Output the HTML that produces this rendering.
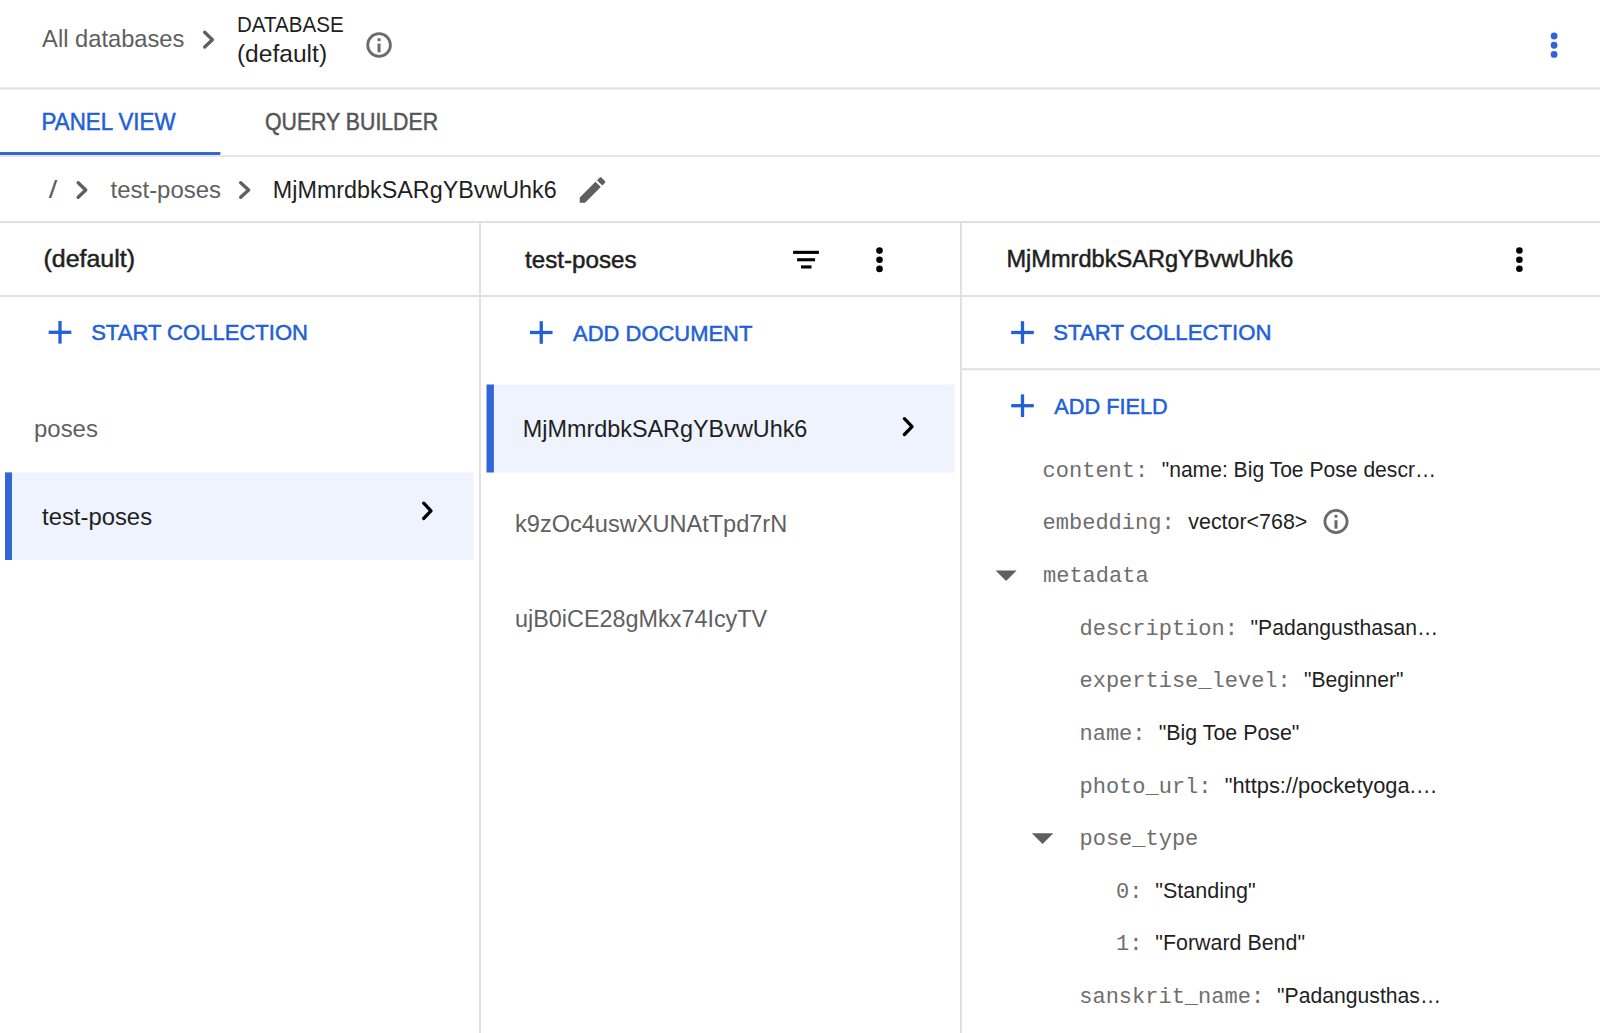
<!DOCTYPE html>
<html lang="en"><head><meta charset="utf-8"><title>Firestore - Panel view</title>
<style>
html,body{margin:0;padding:0;background:#ffffff;width:1600px;height:1033px;overflow:hidden;font-family:"Liberation Sans",sans-serif;}
svg{display:block}
text{white-space:pre}
</style></head>
<body>
<svg width="1600" height="1033" viewBox="0 0 1600 1033">
<rect x="0" y="0" width="1600" height="1033" fill="#ffffff"/>
<rect x="5" y="472.4" width="468.5" height="87.6" fill="#eef3fd"/>
<rect x="5" y="472.4" width="7" height="87.6" fill="#3367d6"/>
<rect x="486.5" y="384.5" width="468.2" height="88" fill="#eef3fd"/>
<rect x="486.5" y="384.5" width="7.4" height="88" fill="#3367d6"/>
<rect x="0" y="87.5" width="1600" height="2" fill="#e0e0e0"/>
<rect x="0" y="155.3" width="1600" height="1.6" fill="#e0e0e0"/>
<rect x="0" y="152" width="220.4" height="3" fill="#3367d6"/>
<rect x="0" y="221" width="1600" height="2" fill="#e0e0e0"/>
<rect x="0" y="295" width="1600" height="2" fill="#e0e0e0"/>
<rect x="962" y="368.2" width="638" height="2" fill="#e0e0e0"/>
<rect x="479" y="222" width="2" height="811" fill="#e0e0e0"/>
<rect x="960" y="222" width="2" height="811" fill="#e0e0e0"/>
<polyline points="204.68,32.27 212.38,39.67 204.68,47.08" fill="none" stroke="#5f5f5f" stroke-width="3.35" stroke-linecap="round" stroke-linejoin="round"/>
<circle cx="379.05" cy="45.05" r="11.35" fill="none" stroke="#6b6b6b" stroke-width="2.8"/><rect x="377.55" y="43.65" width="3.0" height="8.70" fill="#6b6b6b"/><rect x="377.55" y="38.25" width="3.0" height="2.90" fill="#6b6b6b"/>
<circle cx="1554.1" cy="36" r="3.4" fill="#2f64d6"/><circle cx="1554.1" cy="45.25" r="3.4" fill="#2f64d6"/><circle cx="1554.1" cy="54.4" r="3.4" fill="#2f64d6"/>
<polyline points="78.17,182.68 85.73,190.00 78.17,197.32" fill="none" stroke="#5f5f5f" stroke-width="3.35" stroke-linecap="round" stroke-linejoin="round"/>
<polyline points="240.68,182.68 248.63,190.00 240.68,197.32" fill="none" stroke="#5f5f5f" stroke-width="3.35" stroke-linecap="round" stroke-linejoin="round"/>
<path transform="translate(575.49 172.99) scale(1.42)" d="M3 17.25V21h3.75L17.81 9.94l-3.75-3.75L3 17.25zM20.71 7.04c.39-.39.39-1.02 0-1.41l-2.34-2.34c-.39-.39-1.02-.39-1.41 0l-1.83 1.83 3.75 3.75 1.83-1.83z" fill="#5f5f5f"/>
<rect x="793.1" y="250.8" width="25.8" height="3.1" fill="#000"/>
<rect x="797.1" y="258.2" width="18" height="3.1" fill="#000"/>
<rect x="801" y="265.4" width="10.5" height="3.1" fill="#000"/>
<circle cx="879.5" cy="250.6" r="3.3" fill="#000"/><circle cx="879.5" cy="259.75" r="3.3" fill="#000"/><circle cx="879.5" cy="268.9" r="3.3" fill="#000"/>
<circle cx="1519.4" cy="250.5" r="3.3" fill="#000"/><circle cx="1519.4" cy="259.7" r="3.3" fill="#000"/><circle cx="1519.4" cy="268.8" r="3.3" fill="#000"/>
<rect x="48.70" y="330.65" width="22.60" height="3.3" fill="#2160d6"/><rect x="58.35" y="321.00" width="3.3" height="22.60" fill="#2160d6"/>
<rect x="529.95" y="330.85" width="22.60" height="3.3" fill="#2160d6"/><rect x="539.60" y="321.20" width="3.3" height="22.60" fill="#2160d6"/>
<rect x="1011.20" y="330.85" width="22.60" height="3.3" fill="#2160d6"/><rect x="1020.85" y="321.20" width="3.3" height="22.60" fill="#2160d6"/>
<rect x="1011.20" y="404.05" width="22.60" height="3.3" fill="#2160d6"/><rect x="1020.85" y="394.40" width="3.3" height="22.60" fill="#2160d6"/>
<polyline points="423.78,503.18 430.93,510.80 423.78,518.43" fill="none" stroke="#000" stroke-width="3.35" stroke-linecap="round" stroke-linejoin="round"/>
<polyline points="904.42,418.68 912.03,426.60 904.42,434.52" fill="none" stroke="#000" stroke-width="3.35" stroke-linecap="round" stroke-linejoin="round"/>
<circle cx="1336" cy="521.5" r="11.10" fill="none" stroke="#6b6b6b" stroke-width="2.8"/><rect x="1334.50" y="520.13" width="3.0" height="8.53" fill="#6b6b6b"/><rect x="1334.50" y="514.83" width="3.0" height="2.84" fill="#6b6b6b"/>
<polygon points="995.6,570.4 1016.6,570.4 1006.1,580.9" fill="#5f5f5f"/>
<polygon points="1031.8,833.2 1053.3,833.2 1042.55,844" fill="#5f5f5f"/>
<text transform="translate(42.10 47.1) scale(0.9882 1)" font-family="Liberation Sans" font-size="24" fill="#5f5f5f">All databases</text>
<text transform="translate(236.98 32.1) scale(0.9191 1)" font-family="Liberation Sans" font-size="22.4" fill="#1f1f1f">DATABASE</text>
<text transform="translate(236.89 61.9) scale(1.0080 1)" font-family="Liberation Sans" font-size="24.4" fill="#1f1f1f">(default)</text>
<text transform="translate(41.55 130) scale(0.9507 1)" font-family="Liberation Sans" font-size="23.5" fill="#2160d6" stroke="#2160d6" stroke-width="0.5">PANEL VIEW</text>
<text transform="translate(265.00 130) scale(0.9063 1)" font-family="Liberation Sans" font-size="23.5" fill="#555555" stroke="#555555" stroke-width="0.5">QUERY BUILDER</text>
<text transform="translate(48.75 197.5) scale(1.2857 1)" font-family="Liberation Sans" font-size="24" fill="#5f5f5f">/</text>
<text transform="translate(110.60 197.5) scale(0.9973 1)" font-family="Liberation Sans" font-size="24" fill="#5f5f5f">test-poses</text>
<text transform="translate(272.83 197.5) scale(0.9729 1)" font-family="Liberation Sans" font-size="24" fill="#1f1f1f">MjMmrdbkSARgYBvwUhk6</text>
<text transform="translate(43.46 267) scale(1.0407 1)" font-family="Liberation Sans" font-size="24" fill="#1f1f1f" stroke="#1f1f1f" stroke-width="0.5">(default)</text>
<text transform="translate(525.00 268.1) scale(1.0081 1)" font-family="Liberation Sans" font-size="24" fill="#1f1f1f" stroke="#1f1f1f" stroke-width="0.5">test-poses</text>
<text transform="translate(1006.42 266.5) scale(0.9832 1)" font-family="Liberation Sans" font-size="24" fill="#1f1f1f" stroke="#1f1f1f" stroke-width="0.5">MjMmrdbkSARgYBvwUhk6</text>
<text transform="translate(91.17 340.3) scale(0.9800 1)" font-family="Liberation Sans" font-size="22.5" fill="#2160d6" stroke="#2160d6" stroke-width="0.5">START COLLECTION</text>
<text transform="translate(573.10 340.5) scale(0.9766 1)" font-family="Liberation Sans" font-size="22.5" fill="#2160d6" stroke="#2160d6" stroke-width="0.5">ADD DOCUMENT</text>
<text transform="translate(1053.31 340.3) scale(0.9864 1)" font-family="Liberation Sans" font-size="22.5" fill="#2160d6" stroke="#2160d6" stroke-width="0.5">START COLLECTION</text>
<text transform="translate(1054.30 413.8) scale(0.9650 1)" font-family="Liberation Sans" font-size="22.5" fill="#2160d6" stroke="#2160d6" stroke-width="0.5">ADD FIELD</text>
<text transform="translate(34.00 436.7) scale(0.9984 1)" font-family="Liberation Sans" font-size="24" fill="#5f5f5f">poses</text>
<text transform="translate(42.00 524.6) scale(0.9945 1)" font-family="Liberation Sans" font-size="24" fill="#1f1f1f">test-poses</text>
<text transform="translate(522.77 436.6) scale(0.9751 1)" font-family="Liberation Sans" font-size="24" fill="#1f1f1f">MjMmrdbkSARgYBvwUhk6</text>
<text transform="translate(515.02 531.75) scale(0.9818 1)" font-family="Liberation Sans" font-size="24" fill="#5f5f5f">k9zOc4uswXUNAtTpd7rN</text>
<text transform="translate(515.03 627.05) scale(0.9748 1)" font-family="Liberation Sans" font-size="24" fill="#5f5f5f">ujB0iCE28gMkx74IcyTV</text>
<text transform="translate(1042.60 477.3) scale(1.0000 1)" font-family="Liberation Mono" font-size="22" fill="#6e6e6e">content:</text>
<text transform="translate(1161.66 477.3) scale(0.9420 1)" font-family="Liberation Sans" font-size="22.4" fill="#1f1f1f">"name: Big Toe Pose descr…</text>
<text transform="translate(1042.60 528.7) scale(1.0000 1)" font-family="Liberation Mono" font-size="22" fill="#6e6e6e">embedding:</text>
<text transform="translate(1188.30 528.7) scale(0.9565 1)" font-family="Liberation Sans" font-size="22.4" fill="#1f1f1f">vector&lt;768&gt;</text>
<text transform="translate(1043.00 581.5) scale(1.0000 1)" font-family="Liberation Mono" font-size="22" fill="#6e6e6e">metadata</text>
<text transform="translate(1079.50 634.9) scale(1.0000 1)" font-family="Liberation Mono" font-size="22" fill="#6e6e6e">description:</text>
<text transform="translate(1250.55 634.9) scale(0.9462 1)" font-family="Liberation Sans" font-size="22.4" fill="#1f1f1f">"Padangusthasan…</text>
<text transform="translate(1079.50 686.5) scale(1.0000 1)" font-family="Liberation Mono" font-size="22" fill="#6e6e6e">expertise_level:</text>
<text transform="translate(1304.06 686.5) scale(0.9423 1)" font-family="Liberation Sans" font-size="22.4" fill="#1f1f1f">"Beginner"</text>
<text transform="translate(1079.50 739.7) scale(1.0000 1)" font-family="Liberation Mono" font-size="22" fill="#6e6e6e">name:</text>
<text transform="translate(1158.75 739.7) scale(0.9548 1)" font-family="Liberation Sans" font-size="22.4" fill="#1f1f1f">"Big Toe Pose"</text>
<text transform="translate(1079.50 792.5) scale(1.0000 1)" font-family="Liberation Mono" font-size="22" fill="#6e6e6e">photo_url:</text>
<text transform="translate(1224.73 792.5) scale(0.9749 1)" font-family="Liberation Sans" font-size="22.4" fill="#1f1f1f">"https://pocketyoga.…</text>
<text transform="translate(1079.50 844.8) scale(1.0000 1)" font-family="Liberation Mono" font-size="22" fill="#6e6e6e">pose_type</text>
<text transform="translate(1116.00 897.5) scale(1.0000 1)" font-family="Liberation Mono" font-size="22" fill="#6e6e6e">0:</text>
<text transform="translate(1155.29 897.5) scale(0.9636 1)" font-family="Liberation Sans" font-size="22.4" fill="#1f1f1f">"Standing"</text>
<text transform="translate(1116.00 950) scale(1.0000 1)" font-family="Liberation Mono" font-size="22" fill="#6e6e6e">1:</text>
<text transform="translate(1155.29 950) scale(0.9565 1)" font-family="Liberation Sans" font-size="22.4" fill="#1f1f1f">"Forward Bend"</text>
<text transform="translate(1079.25 1002.5) scale(1.0000 1)" font-family="Liberation Mono" font-size="22" fill="#6e6e6e">sanskrit_name:</text>
<text transform="translate(1277.05 1002.5) scale(0.9456 1)" font-family="Liberation Sans" font-size="22.4" fill="#1f1f1f">"Padangusthas…</text>
</svg>
</body></html>
